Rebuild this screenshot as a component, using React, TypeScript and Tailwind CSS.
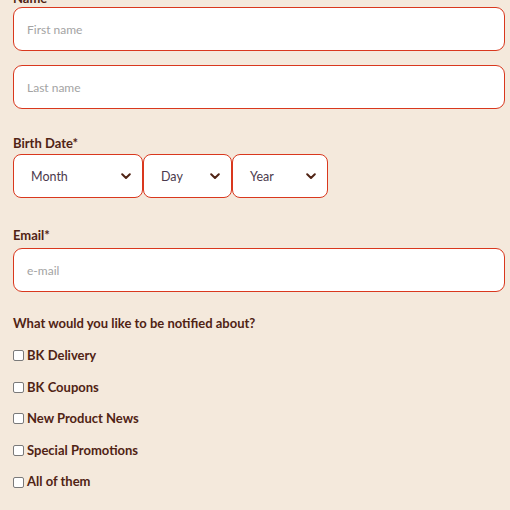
import { useState } from 'react';

const font = { fontFamily: 'Lato, "Noto Sans", sans-serif' };

function Chevron() {
  return (
    <svg width="10" height="7" viewBox="0 0 10 7" className="shrink-0">
      <path d="M1.2 1.3 L5 5 L8.8 1.3" fill="none" stroke="#502314" strokeWidth="2" strokeLinecap="round" strokeLinejoin="round" />
    </svg>
  );
}

function SelectBox({ label, width }: { label: string; width: string }) {
  return (
    <div
      className={`${width} h-[44px] flex items-center justify-between pl-[17px] pr-[11px] bg-white border border-[#d9381e] rounded-[8px] text-[12.5px] text-[#4b3a4d]`}
    >
      <span className="pt-[2px]">{label}</span>
      <Chevron />
    </div>
  );
}

export default function App() {
  const [checked, setChecked] = useState<Record<string, boolean>>({});
  const options = ['BK Delivery', 'BK Coupons', 'New Product News', 'Special Promotions', 'All of them'];

  return (
    <div className="w-[510px] h-[510px] overflow-hidden bg-[#f4e9dc]" style={font}>
      <div className="pl-[13px] pr-[5px]">
        <label className="block -mt-[11px] h-[18px] text-[13px] font-bold text-[#502314]">Name*</label>
        <input
          type="text"
          placeholder="First name"
          className="block w-full h-[44px] px-[13px] bg-white border border-[#d9381e] rounded-[9px] text-[12px] placeholder:text-[#a3a3a3] outline-none"
        />
        <input
          type="text"
          placeholder="Last name"
          className="block w-full h-[44px] mt-[14px] px-[13px] bg-white border border-[#d9381e] rounded-[9px] text-[12px] placeholder:text-[#a3a3a3] outline-none"
        />

        <label className="block mt-[26px] mb-[3px] h-[16px] leading-[16px] text-[13px] font-bold text-[#502314]">Birth Date*</label>
        <div className="flex">
          <SelectBox label="Month" width="w-[130px]" />
          <SelectBox label="Day" width="w-[89px]" />
          <SelectBox label="Year" width="w-[96px]" />
        </div>

        <label className="block mt-[29px] mb-[5px] h-[16px] leading-[16px] text-[13px] font-bold text-[#502314]">Email*</label>
        <input
          type="email"
          placeholder="e-mail"
          className="block w-full h-[44px] px-[13px] bg-white border border-[#d9381e] rounded-[9px] text-[12px] placeholder:text-[#a3a3a3] outline-none"
        />

        <p className="mt-[23px] h-[16px] leading-[16px] text-[13px] font-bold text-[#502314]">What would you like to be notified about?</p>
        <div className="mt-[9px] flex flex-col">
          {options.map((o) => (
            <label key={o} className="flex items-center h-[31.6px] gap-[3px] text-[13px] font-bold text-[#502314]">
              <input
                type="checkbox"
                checked={!!checked[o]}
                onChange={() => setChecked({ ...checked, [o]: !checked[o] })}
                className="appearance-none w-[11px] h-[11px] bg-white border border-[#7a7a7a] rounded-[2px] m-0"
              />
              {o}
            </label>
          ))}
        </div>
      </div>
    </div>
  );
}
